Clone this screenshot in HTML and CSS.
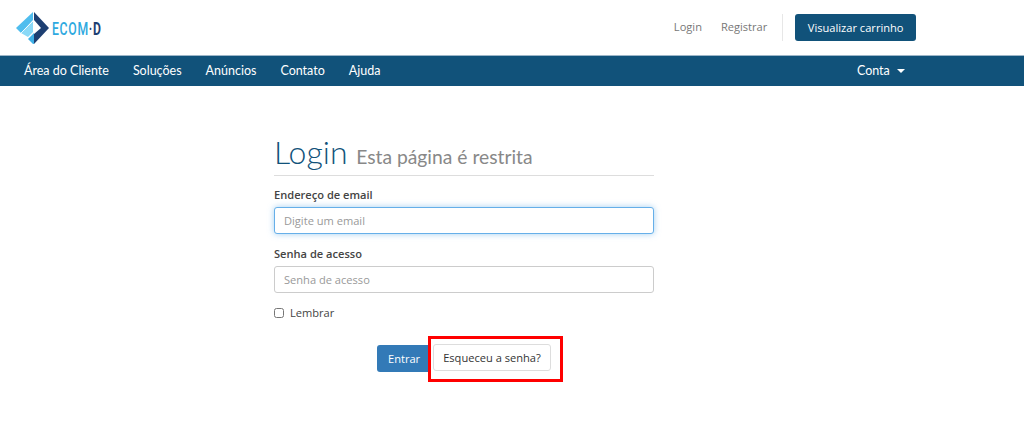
FILE: index.html
```html
<!DOCTYPE html>
<html lang="pt">
<head>
<meta charset="utf-8">
<title>Login</title>
<link rel="stylesheet" href="styles.css">
</head>
<body>
<header class="topbar">
  <a class="logo" href="#">
    <svg class="logo-mark" width="33" height="33" viewBox="0 0 33 33">
      <path d="M17 0 L0 16 L5 21 L17 8 Z" fill="#4fbdee"/>
      <path d="M5 21 L17 9 L17 20 L12 25 Z" fill="#8ad9f7"/>
      <path d="M18 0 L33 16 L18 32 L18 22 L25 16 L18 8 Z" fill="#1d3f72"/>
      <path d="M12 27 L18 21 L18 32 L17 32 Z" fill="#3fb0e6"/>
      <path d="M5 21 L17 9" stroke="#fff" stroke-width="0.8" fill="none"/>
    </svg>
    <span class="logo-text">ECOM<span class="logo-dot">·</span><span class="logo-d">D</span></span>
  </a>
  <div class="top-actions">
    <a class="top-link" href="#">Login</a>
    <a class="top-link" href="#">Registrar</a>
    <span class="divider"></span>
    <a class="cart-btn" href="#">Visualizar carrinho</a>
  </div>
</header>
<nav class="navbar">
  <div class="nav-left">
    <a href="#">Área do Cliente</a>
    <a href="#">Soluções</a>
    <a href="#">Anúncios</a>
    <a href="#">Contato</a>
    <a href="#">Ajuda</a>
  </div>
  <a class="nav-account" href="#">Conta <span class="caret"></span></a>
</nav>
<main class="content">
  <form class="login">
    <h1 class="title">Login <small>Esta página é restrita</small></h1>
    <div class="field">
      <label for="email">Endereço de email</label>
      <input class="input input-focus" id="email" type="text" placeholder="Digite um email">
    </div>
    <div class="field">
      <label for="senha">Senha de acesso</label>
      <input class="input" id="senha" type="password" placeholder="Senha de acesso">
    </div>
    <label class="remember"><input type="checkbox"> Lembrar</label>
    <div class="actions">
      <button class="btn btn-primary" type="button">Entrar</button>
      <span class="highlight"><button class="btn btn-default" type="button">Esqueceu a senha?</button></span>
    </div>
  </form>
</main>
</body>
</html>
```
FILE: styles.css
```css
* { box-sizing: border-box; }
html, body { margin: 0; padding: 0; height: 100%; overflow: hidden; }
body { background: #fff; font-family: "Open Sans", sans-serif; font-size: 11.1px; color: #333; }
a { text-decoration: none; }
.topbar { height: 55px; display: flex; align-items: center; justify-content: space-between; padding: 0 108px 0 16px; }
.logo { display: flex; align-items: center; gap: 3px; margin-top: 1px; }
.logo-text { display: block; width: 48px; font-family: "Roboto", sans-serif; font-size: 18px; font-weight: 500; letter-spacing: 1px; color: #2ea9e0; white-space: nowrap; transform: scaleX(.68); transform-origin: left center; }
.logo-dot { color: #1d3f72; }
.logo-d { color: #1d3f72; font-weight: 700; }
.top-actions { display: flex; align-items: center; }
.top-link { color: #777; margin: 0 19px 2px 0; }
.divider { width: 1px; height: 27px; background: #e7e7e7; margin: 0 12px 0 -4px; }
.cart-btn { background: #11527a; color: #fff; height: 27px; line-height: 27px; padding: 0 12.5px; border-radius: 3px; }
.navbar { height: 31px; background: #11527a; border-top: 1px solid #9db6c8; display: flex; align-items: center; justify-content: space-between; padding: 0 119px 2px 24px; font-family: "Lato", sans-serif; font-size: 12.5px; }
.navbar a { color: #fff; }
.nav-left { display: flex; gap: 24px; }
.caret { display: inline-block; margin-left: 4px; vertical-align: middle; border-top: 4px solid #fff; border-left: 4px solid transparent; border-right: 4px solid transparent; }
.content { padding: 48px 0 0 274px; }
.login { width: 380px; }
.title { margin: 0 0 10px; border-bottom: 1px solid #ddd; font-family: "Lato", sans-serif; font-weight: 300; font-size: 32px; line-height: 36px; color: #11527a; }
.title small { font-size: 19.3px; color: #888; font-weight: 400; }
.field { margin-bottom: 11px; }
.field label { display: block; font-weight: 600; font-size: 11.1px; line-height: 17px; margin-bottom: 4px; color: #444; }
.input { display: block; width: 100%; height: 27px; border: 1px solid #ccc; border-radius: 3px; padding: 0 9px; font-family: inherit; font-size: 11.1px; outline: none; }
.input::placeholder { color: #999; opacity: 1; }
.input-focus { border-color: #66afe9; box-shadow: 0 0 6px rgba(102,175,233,.6); }
.remember { display: flex; align-items: center; gap: 6px; color: #444; margin-top: 12px; }
.remember input { margin: 0; width: 10px; height: 10px; }
.actions { display: flex; align-items: flex-start; padding-left: 103px; margin-top: 16px; }
.btn { height: 27px; font-family: inherit; font-size: 11.1px; border-radius: 3px; padding: 0 9px; border: 1px solid transparent; }
.btn-primary { background: #337ab7; color: #fff; margin-top: 9px; padding: 0 10px; }
.btn-default { background: #fff; border-color: #ddd; color: #333; }
.highlight { display: flex; margin-left: -3px; padding: 5px 9px 8px 2px; border: 3px solid #f00; position: relative; z-index: 1; }
```
